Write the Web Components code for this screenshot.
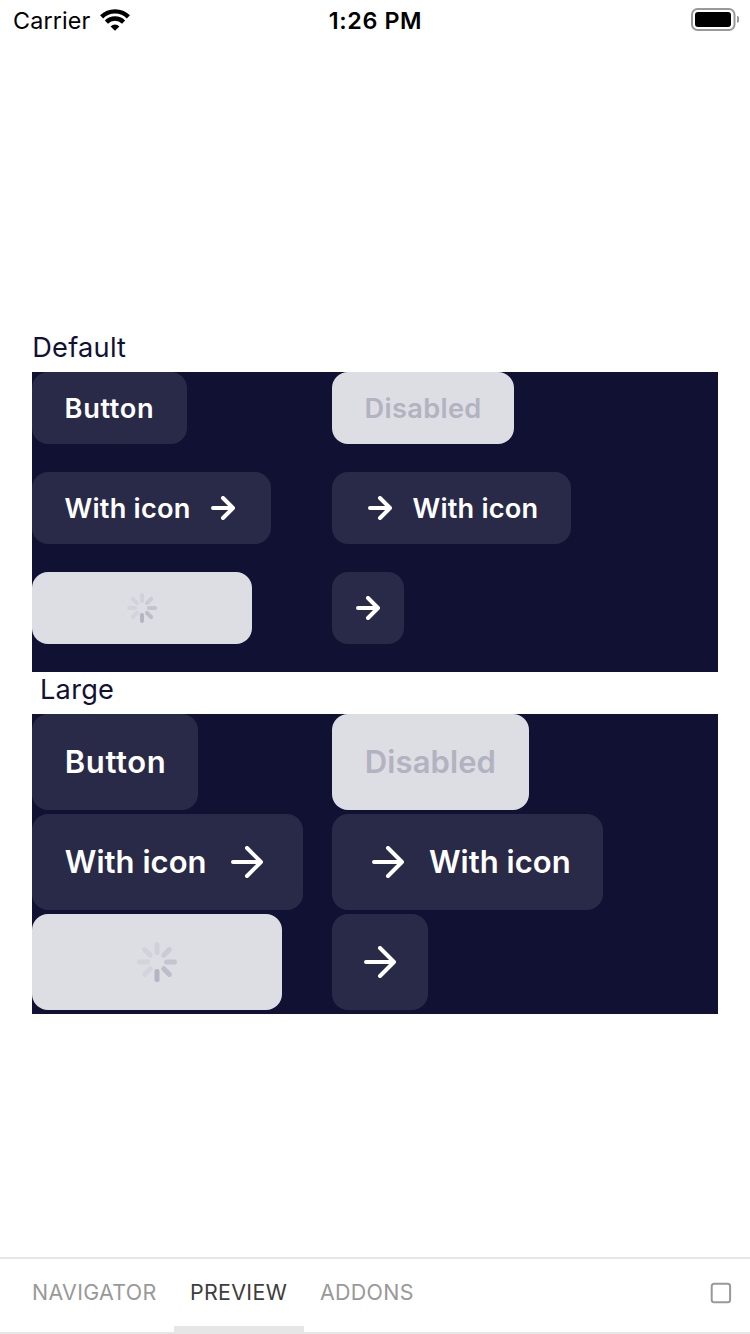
<!DOCTYPE html>
<html lang="en">
<head>
<meta charset="utf-8">
<title>Buttons</title>
<style>
  html, body { margin: 0; height: 100%; background: #fff; }
  body { font-family: Inter, "Liberation Sans", sans-serif; font-kerning: normal; overflow: hidden; }
</style>
</head>
<body>
<story-screen>
  <status-bar slot="top"></status-bar>
  <button-group label="Default">
    <ui-button style="width:155px;--ls:.65px">Button</ui-button>
    <ui-button disabled style="width:182px;--ls:.32px">Disabled</ui-button>
    <ui-button style="width:239px;--ls:.2px">With icon<arrow-icon slot="end"></arrow-icon></ui-button>
    <ui-button style="width:239px;--ls:.2px"><arrow-icon slot="start"></arrow-icon>With icon</ui-button>
    <ui-button disabled center style="width:220px"><load-spinner></load-spinner></ui-button>
    <ui-button center style="width:72px"><arrow-icon></arrow-icon></ui-button>
  </button-group>
  <button-group label="Large" indent>
    <ui-button large style="width:166px;--ls:.6px">Button</ui-button>
    <ui-button large disabled style="width:197px;--ls:.1px">Disabled</ui-button>
    <ui-button large style="width:271px;--ls:.02px">With icon<arrow-icon large slot="end"></arrow-icon></ui-button>
    <ui-button large style="width:271px;--ls:.02px"><arrow-icon large slot="start"></arrow-icon>With icon</ui-button>
    <ui-button large disabled center style="width:250px"><load-spinner large></load-spinner></ui-button>
    <ui-button large center style="width:96px"><arrow-icon large></arrow-icon></ui-button>
  </button-group>
  <tab-bar slot="bottom">
    <tab-item style="width:142px;--pad:32px">NAVIGATOR</tab-item>
    <tab-item active style="width:114px;--pad:16px">PREVIEW</tab-item>
    <tab-item style="width:110px;--pad:16px">ADDONS</tab-item>
  </tab-bar>
</story-screen>
<script>
class Base extends HTMLElement {
  constructor() {
    super();
    this.attachShadow({ mode: 'open' }).innerHTML = this.render();
  }
}

customElements.define('story-screen', class extends Base {
  render() {
    return `<style>
      :host { display: flex; flex-direction: column; height: 1334px; width: 750px; }
      main { flex: 1; padding: 290px 32px 0; }
    </style>
    <slot name="top"></slot><main><slot></slot></main><slot name="bottom"></slot>`;
  }
});

customElements.define('status-bar', class extends Base {
  render() {
    return `<style>
      :host { display: grid; grid-template-columns: 1fr auto 1fr; align-items: start; height: 40px;
              padding: 0 11px 0 13px; box-sizing: border-box; font-size: 23.3px; line-height: 41px; color: #000; }
      .left { display: flex; align-items: start; }
      .carrier { width: 86.5px; letter-spacing: .15px; }
      .time { font-weight: 560; letter-spacing: .6px; margin-left: -1px; }
      .right { display: flex; justify-content: flex-end; }
      svg { display: block; }
      .wifi { margin-top: 9px; }
      .battery { margin-top: 8px; }
    </style>
    <div class="left"><span class="carrier">Carrier</span>
      <svg class="wifi" width="30" height="22" viewBox="0 0 30 22">
        <g fill="none" stroke="#000" stroke-width="4.4">
          <path d="M1.6 7.9A19 19 0 0 1 28.4 7.9"/><path d="M6.4 13.1A12.2 12.2 0 0 1 23.6 13.1"/>
        </g>
        <path d="M15 21.8L10.6 17.4A6.2 6.2 0 0 1 19.4 17.4Z"/>
      </svg></div>
    <span class="time">1:26 PM</span>
    <div class="right"><svg class="battery" width="48" height="24" viewBox="0 0 48 24">
      <rect x="1" y="1" width="42.5" height="21" rx="5.5" fill="none" stroke="#999" stroke-width="2"/>
      <rect x="4" y="4" width="36" height="15" rx="3" fill="#000"/>
      <path d="M46 7.8a3.8 3.8 0 0 1 0 7.2Z" fill="#999"/>
    </svg></div>`;
  }
});

customElements.define('button-group', class extends Base {
  render() {
    const indent = this.hasAttribute('indent');
    return `<style>
      :host { display: block; }
      .label { padding-top: 1px; line-height: 33px; margin-bottom: 8px; font-size: 27.2px; color: #113;
               padding-left: ${indent ? 8 : 0.2}px; letter-spacing: .25px; }
      .panel { display: grid; grid-template-columns: 300px 1fr; grid-auto-rows: 100px;
               align-items: start; background: #113; }
    </style>
    <div class="label">${this.getAttribute('label')}</div>
    <div class="panel"><slot></slot></div>`;
  }
});

customElements.define('ui-button', class extends Base {
  render() {
    return `<style>
      :host { display: flex; align-items: center; box-sizing: border-box; height: 72px; padding: 0 36px 0 32.6px;
              border-radius: 16px; background: #292948; color: #fff; font-size: 27.2px; font-weight: 580;
              letter-spacing: var(--ls, 0); white-space: nowrap; }
      span { line-height: 33px; margin-top: 1px; }
      ::slotted([slot="end"]) { margin-left: auto; }
      ::slotted([slot="start"]) { margin: 0 20.5px 0 3.4px; }
      :host([large]) { height: 96px; font-size: 31px; padding: 0 40px 0 32.8px; }
      :host([large]) span { line-height: 37px; margin: 0 0 1px; }
      :host([large]) ::slotted([slot="start"]) { margin: 0 25px 0 7.2px; }
      :host([disabled]) { background: #dddde4; color: #b2b2c0; }
      :host([center]) { justify-content: center; padding: 0; }
      :host([center]) span { margin: 0; }
    </style>
    <slot name="start"></slot><span><slot></slot></span><slot name="end"></slot>`;
  }
});

customElements.define('arrow-icon', class extends Base {
  render() {
    const s = this.hasAttribute('large') ? 32 : 24, m = s / 2;
    return `<style>:host { display: block; } svg { display: block; }</style>
    <svg width="${s}" height="${s}" viewBox="0 0 ${s} ${s}" fill="none" stroke="#fff" stroke-width="4"
      stroke-linecap="round" stroke-linejoin="round">
      <path d="M2 ${m}H${s - 2}M${m} 2L${s - 2} ${m}L${m} ${s - 2}"/></svg>`;
  }
});

customElements.define('load-spinner', class extends Base {
  render() {
    const large = this.hasAttribute('large');
    const r = large ? 20 : 15, inner = large ? 7 : 5, w = large ? 5 : 4;
    const tones = ['#d1d1da', '#cbcbd5', '#c4c4cf', '#bdbdc9', '#b5b5c2', '#d4d4dd', '#d3d3dc', '#d2d2db'];
    const bars = tones.map((c, i) =>
      `<rect x="${-w / 2}" y="${-r}" width="${w}" height="${r - inner}" rx="${w / 2}" fill="${c}" transform="rotate(${i * 45})"/>`).join('');
    return `<style>:host { display: block; } svg { display: block; }</style>
    <svg width="${2 * r}" height="${2 * r}" viewBox="${-r} ${-r} ${2 * r} ${2 * r}">${bars}</svg>`;
  }
});

customElements.define('tab-bar', class extends Base {
  render() {
    return `<style>
      :host { display: flex; box-sizing: border-box; height: 77px; border-top: 2px solid #e6e6e6;
              box-shadow: inset 0 -2px #e6e6e6; }
      .toggle { margin: auto 18px auto auto; padding-bottom: 7px; }
      svg { display: block; }
    </style>
    <slot></slot>
    <div class="toggle"><svg width="22" height="22" viewBox="0 0 22 22">
      <rect x="1.7" y="1.7" width="18.4" height="18.6" rx="2.5" fill="none" stroke="#999" stroke-width="2"/></svg></div>`;
  }
});

customElements.define('tab-item', class extends Base {
  render() {
    return `<style>
      :host { display: block; box-sizing: content-box; padding-left: var(--pad); font-size: 21.4px; line-height: 66px;
              height: 67px; color: #999; font-weight: 370; letter-spacing: .33px; white-space: nowrap; }
      :host([active]) { color: #3d3d3d; border-bottom: 8px solid #e6e6e6; }
    </style><slot></slot>`;
  }
});
</script>
</body>
</html>
